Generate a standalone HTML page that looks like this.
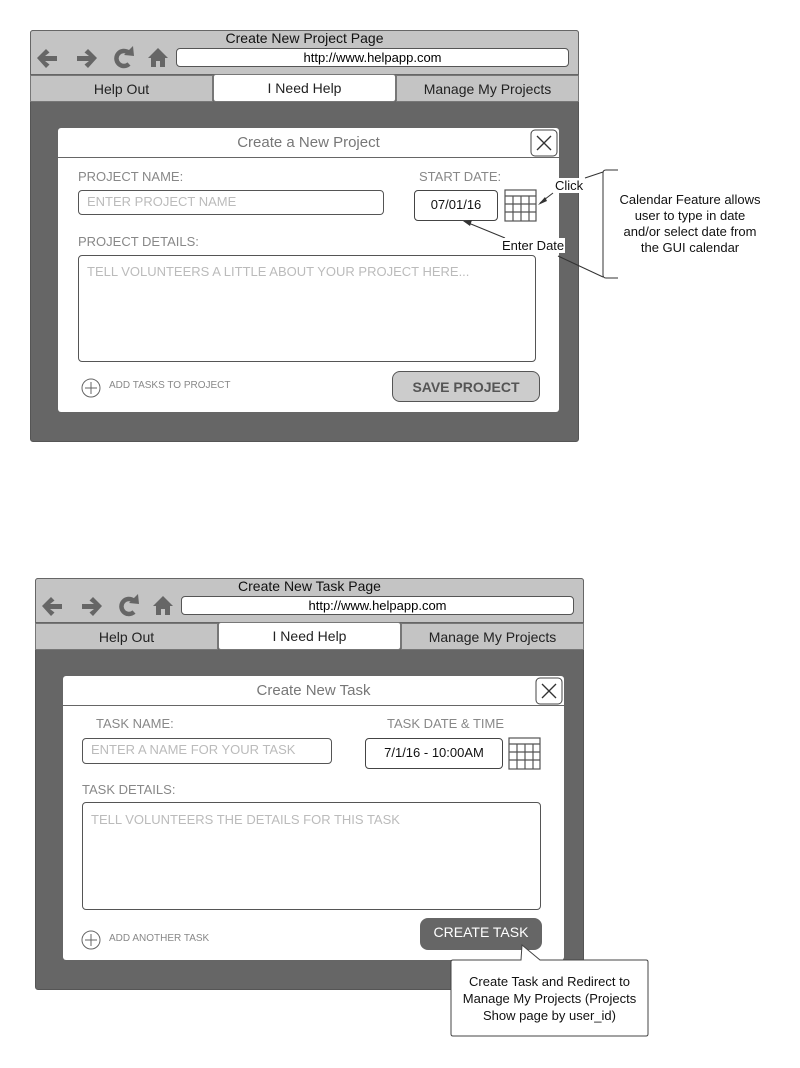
<!DOCTYPE html>
<html><head><meta charset="utf-8"><style>
*{box-sizing:border-box;margin:0;padding:0}
body{width:800px;height:1068px;background:#fff;position:relative;font-family:"Liberation Sans",sans-serif;overflow:hidden}
.a{position:absolute}
.frame{background:#666;border:1px solid #555;border-radius:3px}
.bar{background:#c4c4c4;border:1px solid #666}
.t{font-size:14px;color:#111;text-align:center;line-height:1}
.url{background:#fff;border:1px solid #555;border-radius:4px;font-size:13px;text-align:center;line-height:17px}
.tab{background:#c4c4c4;border:1px solid #777;font-size:14px;text-align:center;line-height:26px;color:#222}
.tab.on{background:#fff;border-radius:3px}
.dlg{background:#fff;border-radius:3px}
.hd{border-bottom:1px solid #666;font-size:15px;color:#777;text-align:center;line-height:29px}
.lbl{font-size:13px;color:#888;line-height:1}
.in{border:1.5px solid #555;border-radius:4px;background:#fff;font-size:13px;color:#bbb;line-height:22px;padding-left:8px}
.dt{border:1.5px solid #444;border-radius:4px;background:#fff;font-size:13px;color:#111;text-align:center}
.small{font-size:10px;color:#888}
.ann{font-size:13px;color:#111;background:#fff;line-height:1}
</style></head><body>

<div class="a frame" style="left:30px;top:30px;width:549px;height:412px"></div>
<div class="a bar" style="left:30px;top:30px;width:549px;height:45px;border-radius:3px 3px 0 0"></div>
<div class="a t" style="left:30px;top:31px;width:549px">Create New Project Page</div>
<div class="a url" style="left:176px;top:48px;width:393px;height:19px">http://www.helpapp.com</div>
<div class="a tab" style="left:30px;top:75px;width:183px;height:27px">Help Out</div>
<div class="a tab on" style="left:213px;top:74px;width:183px;height:28px">I Need Help</div>
<div class="a tab" style="left:396px;top:75px;width:183px;height:27px">Manage My Projects</div>
<div class="a dlg" style="left:58px;top:128px;width:501px;height:284px"></div>
<div class="a hd" style="left:58px;top:128px;width:501px;height:30px">Create a New Project</div>
<div class="a lbl" style="left:78px;top:170px">PROJECT NAME:</div>
<div class="a in" style="left:78px;top:190px;width:306px;height:25px">ENTER PROJECT NAME</div>
<div class="a lbl" style="left:419px;top:170px">START DATE:</div>
<div class="a dt" style="left:414px;top:190px;width:84px;height:31px;line-height:28px">07/01/16</div>
<div class="a lbl" style="left:78px;top:235px">PROJECT DETAILS:</div>
<div class="a in" style="left:78px;top:255px;width:458px;height:107px;line-height:32px">TELL VOLUNTEERS A LITTLE ABOUT YOUR PROJECT HERE...</div>
<div class="a small" style="left:109px;top:380px">ADD TASKS TO PROJECT</div>
<div class="a" style="left:392px;top:371px;width:148px;height:31px;background:#ccc;border:1.5px solid #555;border-radius:8px;font-size:14px;font-weight:bold;color:#555;text-align:center;line-height:30px">SAVE PROJECT</div>

<div class="a frame" style="left:35px;top:578px;width:549px;height:412px"></div>
<div class="a bar" style="left:35px;top:578px;width:549px;height:45px;border-radius:3px 3px 0 0"></div>
<div class="a t" style="left:35px;top:579px;width:549px">Create New Task Page</div>
<div class="a url" style="left:181px;top:596px;width:393px;height:19px">http://www.helpapp.com</div>
<div class="a tab" style="left:35px;top:623px;width:183px;height:27px">Help Out</div>
<div class="a tab on" style="left:218px;top:622px;width:183px;height:28px">I Need Help</div>
<div class="a tab" style="left:401px;top:623px;width:183px;height:27px">Manage My Projects</div>
<div class="a dlg" style="left:63px;top:676px;width:501px;height:284px"></div>
<div class="a hd" style="left:63px;top:676px;width:501px;height:30px">Create New Task</div>
<div class="a lbl" style="left:96px;top:717px">TASK NAME:</div>
<div class="a in" style="left:82px;top:738px;width:250px;height:26px">ENTER A NAME FOR YOUR TASK</div>
<div class="a lbl" style="left:387px;top:717px">TASK DATE &amp; TIME</div>
<div class="a dt" style="left:365px;top:738px;width:138px;height:31px;line-height:28px">7/1/16 - 10:00AM</div>
<div class="a lbl" style="left:82px;top:783px">TASK DETAILS:</div>
<div class="a in" style="left:82px;top:802px;width:459px;height:108px;line-height:34px">TELL VOLUNTEERS THE DETAILS FOR THIS TASK</div>
<div class="a small" style="left:109px;top:933px">ADD ANOTHER TASK</div>
<div class="a" style="left:420px;top:918px;width:122px;height:32px;background:#666;border-radius:8px;font-size:14px;color:#fff;text-align:center;line-height:28px">CREATE TASK</div>

<svg class="a" style="left:0;top:0" width="800" height="1068" viewBox="0 0 800 1068">
<defs>
<g id="nav" fill="#666">
 <path d="M37 58 L46 49 L49.5 52.5 L45 56 L57 56 L57 61 L45 61 L49.5 64.5 L46 68 Z"/>
 <path d="M97 58 L88 49 L84.5 52.5 L89 56 L77 56 L77 61 L89 61 L84.5 64.5 L88 68 Z"/>
 <path d="M128.5 52.5 A7.5 7.5 0 1 0 129 64" fill="none" stroke="#666" stroke-width="4.5"/>
 <path d="M124 55 L133 46 L134 56 Z"/>
 <path d="M158 48 L148 58 L151 58 L151 67 L156 67 L156 61 L160 61 L160 67 L165 67 L165 58 L168 58 Z"/>
</g>
<g id="cal" fill="none" stroke="#555" stroke-width="1.2">
 <rect x="0" y="0" width="31" height="31"/><line x1="0" y1="6" x2="31" y2="6"/>
 <line x1="0" y1="14" x2="31" y2="14"/><line x1="0" y1="22" x2="31" y2="22"/>
 <line x1="8" y1="6" x2="8" y2="31"/><line x1="16" y1="6" x2="16" y2="31"/><line x1="24" y1="6" x2="24" y2="31"/>
</g>
<g id="x" stroke="#333" stroke-width="1.3"><line x1="-7" y1="-7" x2="7" y2="7"/><line x1="7" y1="-7" x2="-7" y2="7"/></g>
<g id="plus" fill="none" stroke="#666" stroke-width="1"><circle r="9"/><line x1="-6" y1="0" x2="6" y2="0"/><line x1="0" y1="-6" x2="0" y2="6"/></g>
</defs>
<use href="#nav"/>
<use href="#nav" x="5" y="548"/>
<rect x="531" y="130" width="26" height="26" rx="4" fill="#fff" stroke="#444"/>
<use href="#x" x="544" y="143"/>
<rect x="536" y="678" width="26" height="26" rx="4" fill="#fff" stroke="#444"/>
<use href="#x" x="549" y="691"/>
<use href="#cal" x="505" y="190"/>
<use href="#cal" x="509" y="738"/>
<use href="#plus" x="91" y="388"/>
<use href="#plus" x="91" y="940"/>
<line x1="553" y1="193" x2="540" y2="203" stroke="#333"/>
<path d="M538 205 L545 197 L547 201 Z" fill="#333"/>
<line x1="505" y1="238" x2="466" y2="222" stroke="#333"/>
<path d="M463 221 L472 220 L470 226 Z" fill="#333"/>
<line x1="585" y1="178" x2="603" y2="172" stroke="#333"/>
<line x1="558" y1="256" x2="603" y2="277" stroke="#333"/>
<path d="M618 170 L606 170 Q603 170 603 173 L603 275 Q603 278 606 278 L618 278" fill="none" stroke="#333"/>
<path d="M451 962 Q451 960 453 960 L521 960 L522 945 L540 960 L646 960 Q648 960 648 962 L648 1034 Q648 1036 646 1036 L453 1036 Q451 1036 451 1034 Z" fill="#fff" stroke="#444"/>
</svg>
<div class="a ann" style="left:554px;top:178px;padding:1px 1px">Click</div>
<div class="a ann" style="left:501px;top:238px;padding:1px 1px">Enter Date</div>
<div class="a" style="left:600px;top:192px;width:180px;font-size:13px;line-height:16px;text-align:center;color:#111;white-space:nowrap">Calendar Feature allows<br>user to type in date<br>and/or select date from<br>the GUI calendar</div>
<div class="a" style="left:451px;top:973px;width:197px;font-size:13px;line-height:17px;text-align:center;color:#111">Create Task and Redirect to Manage My Projects (Projects Show page by user_id)</div>
</body></html>
